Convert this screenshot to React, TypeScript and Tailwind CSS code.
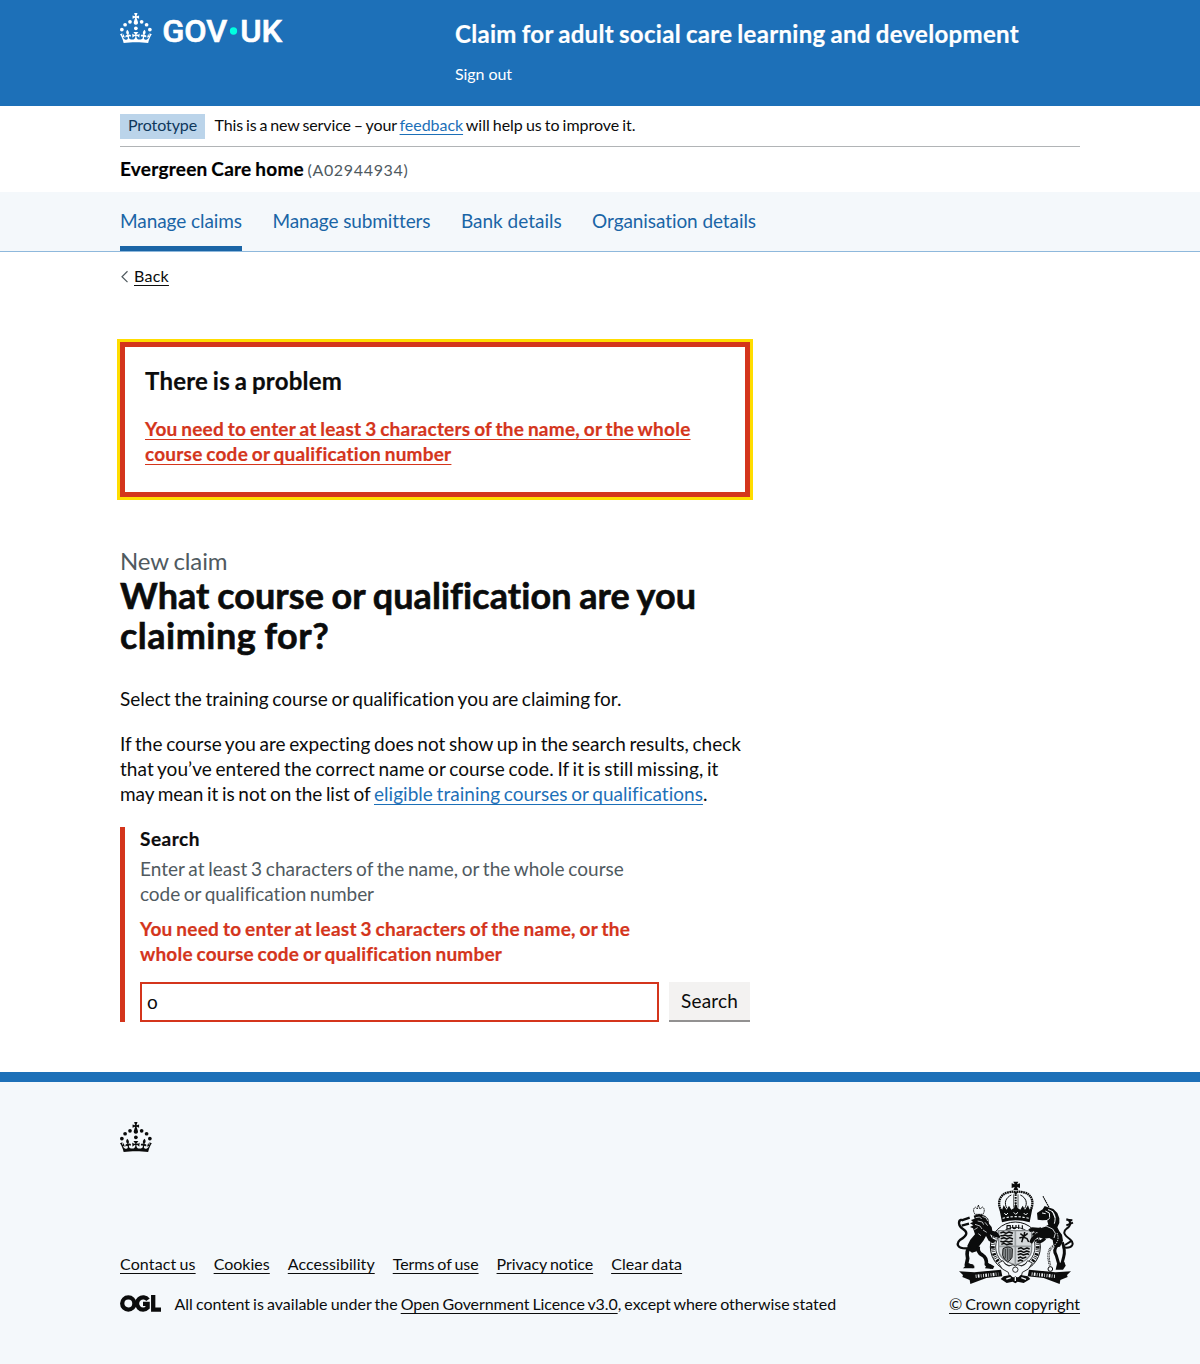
import type { ReactNode } from "react";

function CrownShapes() {
  return (
    <g>
      <circle cx="20" cy="17.6" r="3.7" />
      <circle cx="10.2" cy="23.5" r="3.7" />
      <circle cx="3.7" cy="33.2" r="3.7" />
      <circle cx="31.7" cy="30.6" r="3.7" />
      <circle cx="43.3" cy="17.6" r="3.7" />
      <circle cx="53.2" cy="23.5" r="3.7" />
      <circle cx="59.7" cy="33.2" r="3.7" />
      <path d="M33.1,9.8c.2-.1.3-.3.5-.5l4.6,2.4v-6.8l-4.6,1.5c-.1-.2-.3-.3-.5-.5l1.9-5.9h-6.7l1.9,5.9c-.2.1-.3.3-.5.5l-4.6-1.5v6.8l4.6-2.4c.1.2.3.3.5.5l-2.6,8c-.9,2.8,1.2,5.7,4.1,5.7h0c3,0,5.1-2.9,4.1-5.7l-2.6-8ZM37,37.9s-3.4,3.8-4.1,6.1c2.2,0,4.2-.5,6.4-2.8l-.7,8.5c-2-2.8-4.4-4.1-5.7-3.8.1,3.1.5,6.7,5.8,7.2,3.7.3,6.7-1.5,7-3.8.4-2.6-2-4.3-3.7-1.6-1.4-4.5,2.4-6.1,4.9-3.2-1.9-4.5-1.8-7.7,2.4-10.9,3,4,2.6,7.3-1.2,11.1,2.4-1.3,6.2,0,4,4.6-1.2-2.8-3.7-2.2-4.2.2-.3,1.7.7,3.7,3,4.2,1.9.3,4.7-.9,7-5.9-1.3,0-2.4.7-3.9,1.7l2.4-8c.6,2.3,1.4,3.7,2.2,4.5.6-1.6.5-2.8,0-5.3l5,1.8c-2.6,3.6-5.2,8.7-7.3,17.5-7.4-1.1-15.7-1.7-24.5-1.7h0c-8.8,0-17.1.6-24.5,1.7-2.1-8.9-4.7-13.9-7.3-17.5l5-1.8c-.5,2.5-.6,3.7,0,5.3.8-.8,1.6-2.3,2.2-4.5l2.4,8c-1.5-1-2.6-1.7-3.9-1.7,2.3,5,5.2,6.2,7,5.9,2.3-.4,3.3-2.4,3-4.2-.5-2.4-3-3.1-4.2-.2-2.2-4.6,1.6-6,4-4.6-3.7-3.7-4.2-7.1-1.2-11.1,4.2,3.2,4.3,6.4,2.4,10.9,2.5-2.8,6.3-1.3,4.9,3.2-1.8-2.7-4.1-1-3.7,1.6.3,2.3,3.3,4.1,7,3.8,5.4-.5,5.7-4.2,5.8-7.2-1.3-.2-3.7,1-5.7,3.8l-.7-8.5c2.2,2.3,4.2,2.7,6.4,2.8-.7-2.3-4.1-6.1-4.1-6.1h10.6,0Z" />
    </g>
  );
}

function GovLogo() {
  return (
    <svg viewBox="0 0 324 60" width="162" height="30" fill="white" className="block overflow-visible" aria-label="GOV.UK">
      <CrownShapes />
      <g fontFamily="Roboto" fontWeight="500" fontSize="61" stroke="white" strokeWidth="1.2">
        <text x="84.5" y="57.2" textLength="130" lengthAdjust="spacingAndGlyphs">GOV</text>
        <text x="240.5" y="57.2" textLength="84" lengthAdjust="spacingAndGlyphs">UK</text>
      </g>
      <circle cx="227" cy="36" r="7.3" fill="#00ffe0" />
    </svg>
  );
}

function RoyalArms() {
  return (
    <svg viewBox="30 15 360 315" width="120" height="105" className="block" fill="#0b0c0c" stroke="#0b0c0c" strokeWidth="0" strokeLinecap="butt" strokeLinejoin="round" aria-hidden="true">
      {/* imperial crown */}
      <path d="M205 20h15l-4 8 9-3v14l-9-3 4 10h-15l4-10-9 3v-14l9 3z" />
      <g fill="none">
        <path d="M172 112C154 88 162 58 190 52C201 50 208 48 212 55C216 48 225 50 236 52C264 58 270 88 252 112" strokeWidth="7" strokeDasharray="5 1.5" />
        <path d="M186 100C176 84 182 68 199 60M239 100C249 84 243 68 226 60" strokeWidth="3" />
        <path d="M206 58V98M219 58V98" strokeWidth="2" />
        <path d="M212 50V98" strokeWidth="6" strokeDasharray="5 3" />
      </g>
      <path d="M162 96l9 9 5-14 9 13 7-12 7 12 8-5 5-14 6 14 8 5 7-12 7 12 9-13 5 14 9-9-9 46q-42-12-83 0z" />
      <g fill="none" stroke="#f4f8fb">
        <path d="M173 130q38-10 79 0" strokeWidth="3.5" strokeDasharray="7 5" />
        <path d="M178 114l5 6 6-6M206 112l6 6 7-6M236 114l6 6 6-6" strokeWidth="3" />
      </g>
      {/* garter */}
      <circle cx="211" cy="216" r="75" fill="#f4f8fb" strokeWidth="3" />
      <path d="M162 170A67 67 0 0 0 162 262M260 170A67 67 0 0 1 260 262" fill="none" strokeWidth="11" strokeDasharray="2 4 7 3 2 3" />
      <path d="M186 152h10v10h-10zM203 150v8q5 6 10 0v-8M221 149v13M232 151v12" fill="none" strokeWidth="3.5" />
      <circle cx="211" cy="216" r="59" fill="none" strokeWidth="2.5" />
      {/* shield quarters */}
      <path d="M161 167h99v55c0 26-22 38-49.5 48c-27.5-10-49.500-22-49.500-48z" fill="#d5d9db" stroke="#85898b" strokeWidth="4" />
      <path d="M211 167v103M161 214h99" stroke="#9a9fa1" strokeWidth="5" />
      <g fill="none" strokeWidth="4.5">
        <path d="M166 174l9-3 8 4 9-4 12 4M166 182h8l6-2 8 3 14-2M167 191l10-3 8 4 9-4 10 4M166 199l8 2 8-3 9 3 12-3M169 208l8-3 8 4 10-3 8 2" />
        <path d="M219 221l9-3 8 5 10-4 8 3M218 230l10-2 8 4 9-4 9 3M218 239l9-3 8 4 12-4 5 3M219 249l8-3 6 4 11-4M218 259l8-4 8 3" />
        <path d="M226 176l11 8 11-9M230 202l5-16 11 5 5 10M223 189l13-3M239 171l-2 12" />
      </g>
      <path d="M174 221q17-10 28 0l-1 26q-6 10-13 14q-12-8-15-20z" fill="#8f9496" strokeWidth="3" />
      <path d="M181 222v28M188 220v36M195 222v30" strokeWidth="2" />
      {/* lion supporter */}
      <path d="M90 118q-9-14 1-22l6 6 3-12 5 12 8-6q9 8 1 22z" fill="none" strokeWidth="3" strokeDasharray="4 1.5" />
      <path d="M86 122l16-5 18 5 10 10 2 14 8 10 2 11 14 4 10 14-3 4-16-4-12-7 5 10 10 9-6 8-13-8-8-14-8 14-14 18-6 14-14 4-12-9-2-12 9-18 14-16-6-18-9-4 10-5-10-6 9-4-6-6 11-4z" />
      <path d="M76 216Q62 226 68 250L64 270L84 274M100 214Q96 232 112 240Q126 248 124 268L140 276" fill="none" strokeWidth="11" />
      <path d="M54 280l16-16 18 8v8zM120 280l8-16 20 10-4 8z" />
      <path d="M68 220C36 222 32 206 46 194C66 182 70 172 54 162C40 154 38 136 50 134M50 136L74 128M50 152L72 146" fill="none" strokeWidth="7" />
      <g fill="none" stroke="#f4f8fb" strokeWidth="2.2">
        <path d="M92 128l12-2 6 6M98 138l14 3 4 8M90 148l15 5 6 9M112 124l12 5 4 9M120 142l8 10M88 164l10-6M114 165l11 7M100 176l8 6" />
      </g>
      {/* unicorn supporter */}
      <path d="M294 64l18 33" fill="none" strokeWidth="3.500" strokeDasharray="5 1.5" />
      <path d="M276 114l17-11 6-10 10 4 16 5 12 12 6 16 0 14-6 13 6 12 8 10 3 18-9 18-13 2-7-10-2-12-10-6-16 2-18-4-10 8-8 11-8-5 4-10 10-12 12-6-14-4-10 2-5-8 12-6 18 1 18-3 12-6-4-14-14 1-14-2z" />
      <path d="M340 208Q322 224 334 242L342 270M352 202Q362 228 356 246L350 268M300 190Q286 204 276 200" fill="none" strokeWidth="9" />
      <path d="M332 284l4-18 22-6 4 12-8 12z" />
      <path d="M353 217C384 223 390 205 374 192C357 180 352 171 366 160C380 151 378 135 364 133M364 151l20-8M364 134l18 2M360 210l22-14" fill="none" strokeWidth="6" />
      <g fill="none" stroke="#f4f8fb">
        <path d="M309 104c20 4 25 22 19 42M301 108l12 6 1 14M291 114l11 2M314 130l-12 9M322 108l8 20" strokeWidth="3" />
        <path d="M288 158l15-5 20 9 8 13-4 14" strokeWidth="2.500" />
      </g>
      <path d="M336 174q10 24-12 40q-22 14-8 60" fill="none" strokeWidth="7" strokeDasharray="3 2" />
      <path d="M336 174q10 24-12 40q-22 14-8 60" fill="none" stroke="#f4f8fb" strokeWidth="3" strokeDasharray="4 3" />
      <circle cx="316" cy="282" r="7" fill="none" strokeWidth="3" />
      {/* motto ribbon */}
      <path d="M42 289l46 3 80-8 4 20-48 5-48 18-2-12-22-9 2-6z" />
      <path d="M378 289l-46 3-80-8-4 20 48 5 48 18 2-12 22-9-2-6z" />
      <path d="M92 304l68-7" fill="none" stroke="#f4f8fb" strokeWidth="10" strokeDasharray="2.500 4 5 4 2 5" />
      <path d="M260 297l70 7" fill="none" stroke="#f4f8fb" strokeWidth="10" strokeDasharray="2.500 4 5 4 2 5" />
      <g fill="#f4f8fb" strokeWidth="2.5">
        <path d="M160 264l14-7q6 14 18 16l12-4 7 4 7-4 12 4q12-2 18-16l14 7-12 18-18 10-4 16h-34l-4-16-18-10z" />
        <circle cx="211" cy="284" r="8" />
      </g>
      <path d="M176 304l20-4 9 9 6-5 7 5 9-9 21 4 8 8-20 12-18-4-7 5-8-5-18 4-18-12z" />
      <path d="M184 312l13-4M229 308l14 5M211 306v12" stroke="#f4f8fb" strokeWidth="4" />
    </svg>
  );
}

function OglLogo() {
  return (
    <svg viewBox="0 0 41 17" width="41" height="17" className="block overflow-visible" fill="none" stroke="#0b0c0c" strokeWidth="4.300">
      <circle cx="8.300" cy="8.500" r="6.100" />
      <path d="M28 4.800A6.100 6.100 0 1 0 27.600 12.600V8.900H23" />
      <path d="M33.200 0V14.600H41" />
    </svg>
  );
}

/* One run of text with its own tracking */
function L({ children, className = "" }: { children: ReactNode; className?: string }) {
  return <span className={"inline-block whitespace-pre " + className}>{children}</span>;
}

const link = "underline decoration-1 underline-offset-[3px]";
const bold = "font-bold [-webkit-text-stroke:0.2px] [word-spacing:-1.1px]";

export default function App() {
  return (
    <div className="min-h-[1364px] bg-white font-['Lato',sans-serif] text-[#0b0c0c] [font-variant-ligatures:none]">
      <header className="h-[106px] bg-[#1d70b8] text-white">
        <div className="mx-auto flex w-[960px]">
          <div className="w-[335px] pt-[13px]"><GovLogo /></div>
          <div className="pt-[19px]">
            <div className="text-[24px] leading-[30px] font-bold tracking-[0.3px] [-webkit-text-stroke:0.2px] [word-spacing:-1.1px]">
              <L>Claim for adult social care learning and development</L>
            </div>
            <div className="mt-[15px] text-[16px] leading-[20px] tracking-[-0.06px]"><L>Sign out</L></div>
          </div>
        </div>
      </header>

      <div className="mx-auto w-[960px]">
        <div className="flex h-[41px] items-center border-b border-[#b1b4b6] text-[16px] leading-[20px] [word-spacing:-1px]">
          <span className="mr-[9.5px] h-[25px] w-[85px] bg-[#bbd4ea] px-2 pt-px text-[#0f385c]"><L className="tracking-[-0.1px]">Prototype</L></span>
          <div className="pb-[2px]">
            <L className="tracking-[-0.12px]">{"This is a new service – your "}</L>
            <L className={link + " tracking-[-0.05px] text-[#1d70b8]"}>feedback</L>
            <L className="tracking-[-0.02px]">{" will help us to improve it."}</L>
          </div>
        </div>
        <div className="flex h-[45px] items-baseline pt-[9px] leading-[25px]">
          <L className="text-[19px] font-bold tracking-[0.25px] text-black [-webkit-text-stroke:0.2px] [word-spacing:-1.1px]">Evergreen Care home</L>
          <L className="ml-[3.5px] text-[16px] tracking-[0.67px] text-[#505a5f]">(A02944934)</L>
        </div>
      </div>

      <nav className="h-[60px] border-b border-[#8eb8dc] bg-[#f4f8fb]">
        <div className="mx-auto flex w-[960px] gap-[30.4px] text-[19px] leading-[29px] text-[#1a65a6]">
          <a className="h-[59px] border-b-[5px] border-[#1a65a6] pt-[13.5px]"><L className="tracking-[-0.07px]">Manage claims</L></a>
          <a className="pt-[13.5px]"><L className="tracking-[-0.1px]">Manage submitters</L></a>
          <a className="pt-[13.5px]"><L>Bank details</L></a>
          <a className="pt-[13.5px]"><L className="tracking-[-0.08px]">Organisation details</L></a>
        </div>
      </nav>

      <main className="mx-auto w-[960px] text-[19px] leading-[25px] [word-spacing:-1.2px]">
        <a className="mt-[14px] flex h-[20px] items-center text-[16px] leading-[20px]">
          <svg width="14" height="14" viewBox="0 0 14 14" fill="none" stroke="#505a5f" strokeWidth="1.200"><path d="M7.500 2.300L2 7.700L7.500 13.100" /></svg>
          <L className={link + " tracking-[0.25px]"}>Back</L>
        </a>

        <section className="mt-[56px] h-[155px] w-[630px] border-[5px] border-[#d4351c] px-5 pt-[19px] outline-[3px] outline-[#ffdd00] outline-solid">
          <h2 className="mb-5 text-[24px] leading-[30px] font-bold tracking-[0.21px] [-webkit-text-stroke:0.2px]"><L>There is a problem</L></h2>
          <a className={"block text-[#d4351c] " + bold}>
            <L className={link + " tracking-[0.24px]"}>You need to enter at least 3 characters of the name, or the whole</L>
            <br />
            <L className={link + " tracking-[0.225px]"}>course code or qualification number</L>
          </a>
        </section>

        <div className="w-[630px]">
          <div className="mt-[49px] text-[24px] leading-[30px] tracking-[-0.1px] text-[#505a5f]"><L>New claim</L></div>
          <h1 className="-mt-px text-[36px] leading-[40px] font-bold [-webkit-text-stroke:0.6px]">
            <L className="tracking-[0.065px]">What course or qualification are you</L><br />
            <L className="tracking-[0.48px]">claiming for?</L>
          </h1>
          <p className="mt-[31px]"><L>Select the training course or qualification you are claiming for.</L></p>
          <p className="mt-[20px]">
            <L className="tracking-[0.013px]">If the course you are expecting does not show up in the search results, check</L><br />
            <L className="tracking-[0.05px]">that you’ve entered the correct name or course code. If it is still missing, it</L><br />
            <L className="tracking-[-0.024px]">{"may mean it is not on the list of "}</L>
            <L className={link + " tracking-[0.028px] text-[#1d70b8]"}>eligible training courses or qualifications</L>.
          </p>

          <div className="mt-[21px] flow-root h-[195px] border-l-[5px] border-[#d4351c] pl-[15px]">
            <div className="-mt-px">
              <div className={bold}><L className="tracking-[0.525px]">Search</L></div>
              <div className="mt-[5px] text-[#505a5f]">
                <L className="tracking-[0.03px]">Enter at least 3 characters of the name, or the whole course</L><br />
                <L className="tracking-[-0.04px]">code or qualification number</L>
              </div>
              <div className={"mt-[10px] text-[#d4351c] " + bold}>
                <L className="tracking-[0.255px]">You need to enter at least 3 characters of the name, or the</L><br />
                <L className="tracking-[0.2px]">whole course code or qualification number</L>
              </div>
            </div>
            <div className="mt-[16px] flex gap-[10px]">
              <div className="h-[40px] w-[519px] border-2 border-[#d4351c] px-[5px] pt-[5px]">o</div>
              <button className="h-[40px] w-[81px] border-b-2 border-[#929191] bg-[#f3f2f1] pb-px"><L className="tracking-[0.18px]">Search</L></button>
            </div>
          </div>
        </div>
      </main>

      <footer className="mt-[50px] h-[292px] border-t-[10px] border-[#1d70b8] bg-[#f4f8fb] pt-[40px] text-[16px] leading-[20px] [word-spacing:-1px]">
        <div className="mx-auto w-[960px]">
          <svg viewBox="0 0 64 60" width="32" height="30" fill="#0b0c0c" className="block"><CrownShapes /></svg>
          <div className="mt-[28px] flex items-end justify-between">
            <div>
              <div className="flex gap-[18px]">
                <L className={link + " tracking-[0.12px]"}>Contact us</L>
                <L className={link + " tracking-[0.02px]"}>Cookies</L>
                <L className={link + " tracking-[0.06px]"}>Accessibility</L>
                <L className={link + " tracking-[-0.06px]"}>Terms of use</L>
                <L className={link + " tracking-[-0.04px]"}>Privacy notice</L>
                <L className={link + " tracking-[0.1px]"}>Clear data</L>
              </div>
              <div className="mt-[20px] flex items-center">
                <span className="mr-[13.500px] pb-px"><OglLogo /></span>
                <L>{"All content is available under the "}</L>
                <L className={link + " tracking-[-0.08px]"}>Open Government Licence v3.0</L>
                <L className="tracking-[-0.03px]">, except where otherwise stated</L>
              </div>
            </div>
            <div className="flex flex-col items-end">
              <div className="mr-[5px]"><RoyalArms /></div>
              <div className="mt-[9px]"><L className={link + " tracking-[-0.07px]"}>© Crown copyright</L></div>
            </div>
          </div>
        </div>
      </footer>
    </div>
  );
}
